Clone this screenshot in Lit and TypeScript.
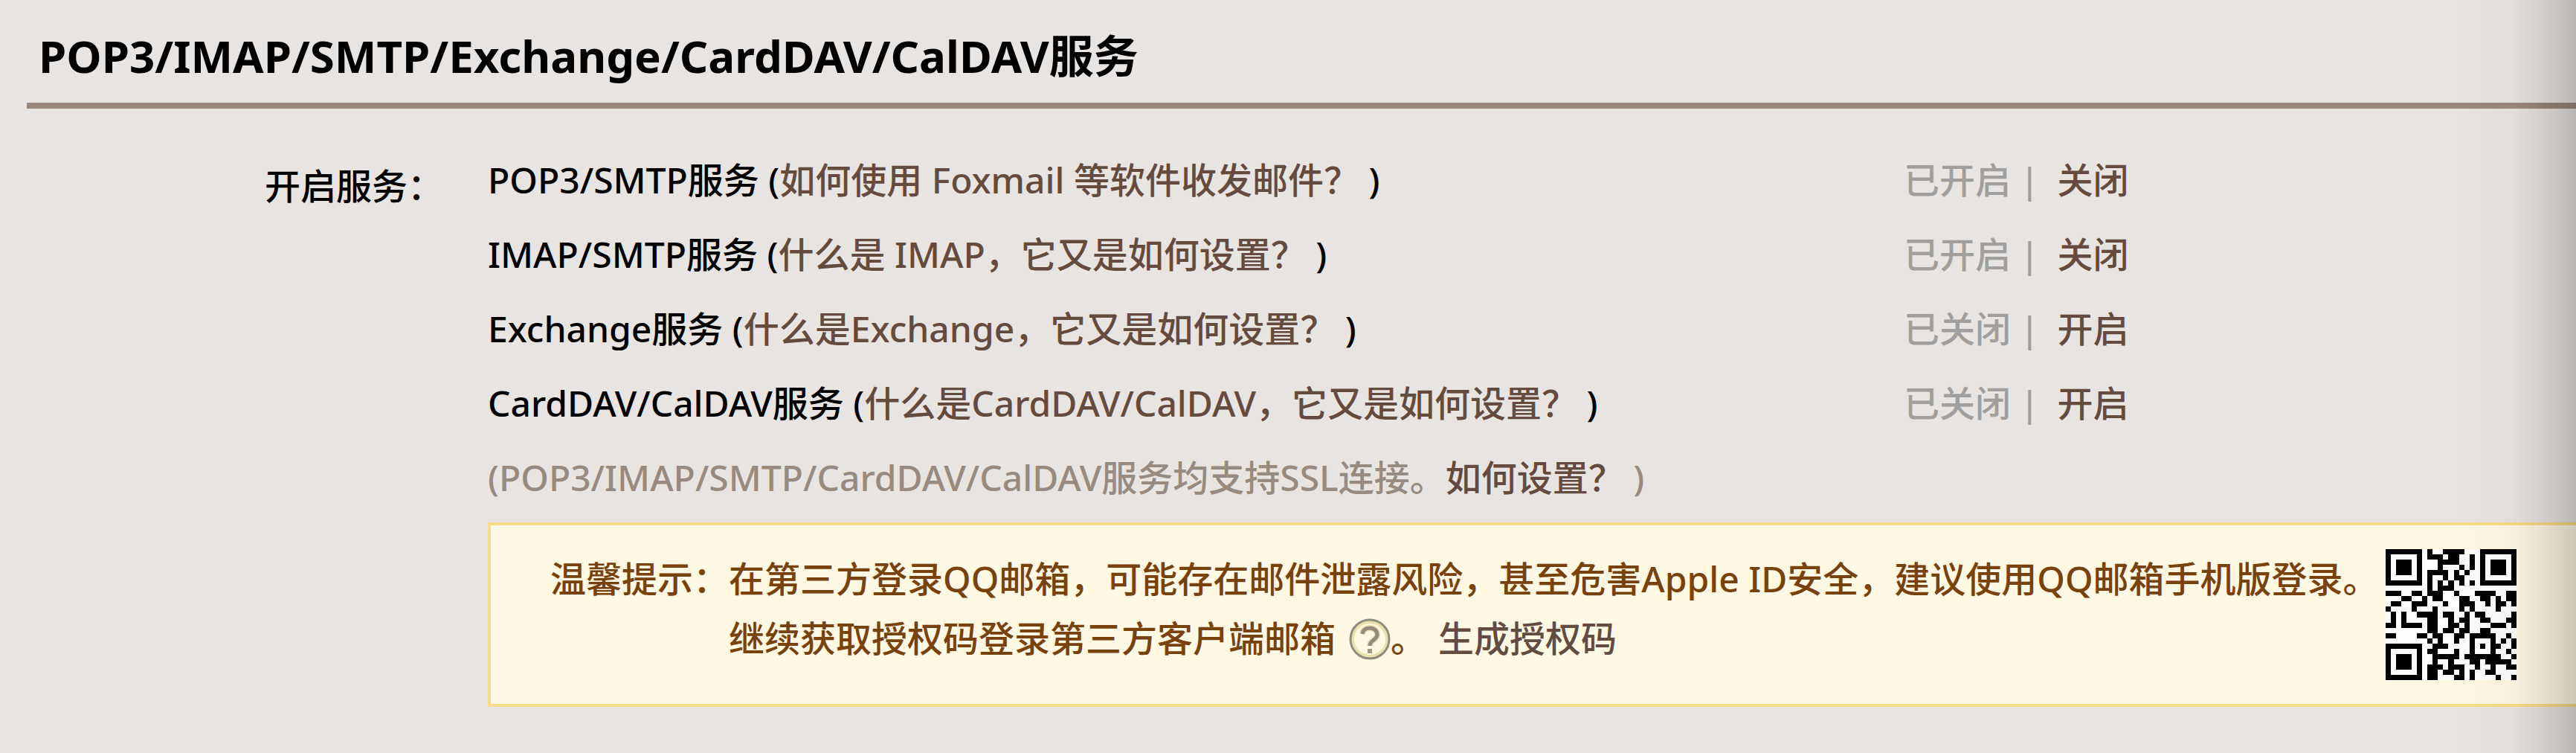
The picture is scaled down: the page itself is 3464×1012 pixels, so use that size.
import { LitElement, html, css } from "lit";
import { customElement, property } from "lit/decorators.js";

interface Service {
  name: string;
  help: string;
  enabled: boolean;
}

/* Full-width punctuation. */
const COMMA = "\uFF0C";
const COLON = "\uFF1A";
const QUESTION = "\uFF1F";

const SERVICES: Service[] = [
  { name: "POP3/SMTP服务", help: `如何使用 Foxmail 等软件收发邮件${QUESTION}`, enabled: true },
  { name: "IMAP/SMTP服务", help: `什么是 IMAP${COMMA}它又是如何设置${QUESTION}`, enabled: true },
  { name: "Exchange服务", help: `什么是Exchange${COMMA}它又是如何设置${QUESTION}`, enabled: false },
  { name: "CardDAV/CalDAV服务", help: `什么是CardDAV/CalDAV${COMMA}它又是如何设置${QUESTION}`, enabled: false },
];

const WARNING = [
  "在第三方登录QQ邮箱",
  "可能存在邮件泄露风险",
  "甚至危害Apple ID安全",
  "建议使用QQ邮箱手机版登录。",
].join(COMMA);

/* One string per module row; # is a dark module. */
const QR_ROWS = [
  "#######.#..####...#######",
  "#.....#.###.##..#.#.....#",
  "#.###.#...####..#.#.###.#",
  "#.###.#...#...#.#.#.###.#",
  "#.###.#.####.#.#..#.###.#",
  "#.....#.#..#.##...#.....#",
  "#######.#.#.#.#.#.#######",
  "........#.###............",
  "###..##.###..#...####..##",
  "...##..#.##...##..##.#.##",
  ".##..###...#..###..#.##.#",
  "#....#...#....#.#....#...",
  ".#.#..####.##..#.##.....#",
  ".#.#....##..#.##..##...##",
  "##.####.##..##.#....###.#",
  "........##.##.##..##.....",
  "##....##.##..##.#####..#.",
  "........#.#..#..#...#.#.#",
  "#######..###....#.#.##..#",
  "#.....#.##...#..#...#..#.",
  "#.###.#..#####.#######..#",
  "#.###.#..#..#...##.#####.",
  "#.###.#.###.###..#..#..##",
  "#.....#.##.##.#.#..##....",
  "#######.##...##.#....#..#",
];

@customElement("qr-code")
export class QrCode extends LitElement {
  static styles = css`
    :host {
      display: block;
      flex: none;
    }
    .code {
      display: block;
      width: 176px;
      height: 176px;
    }
  `;

  render() {
    const d = QR_ROWS.map((row, y) =>
      [...row.matchAll(/#+/g)]
        .map((run) => `M${run.index} ${y}h${run[0].length}v1h-${run[0].length}z`)
        .join("")
    ).join("");
    return html`
      <svg class="code" viewBox="0 0 25 25" role="img" aria-label="QQ邮箱手机版" shape-rendering="crispEdges">
        <rect width="25" height="25" fill="#fdfdfc"></rect>
        <path d=${d} fill="#000"></path>
      </svg>
    `;
  }
}

@customElement("service-row")
export class ServiceRow extends LitElement {
  @property({ attribute: false }) service!: Service;

  static styles = css`
    :host {
      display: grid;
      grid-template-columns: minmax(0, 1fr) 904px;
      line-height: 100px;
    }
    a {
      color: #644b40;
      text-decoration: none;
    }
    .status {
      display: flex;
      color: #a09f9e;
    }
    .divider {
      margin: 0 24px 0 12px;
    }
  `;

  render() {
    const { name, help, enabled } = this.service;
    return html`
      <div>${name} (<a href="#help">${help}</a> )</div>
      <div class="status">
        <span>${enabled ? "已开启" : "已关闭"}</span>
        <span class="divider">|</span>
        <a href="#toggle">${enabled ? "关闭" : "开启"}</a>
      </div>
    `;
  }
}

@customElement("app-root")
export class AppRoot extends LitElement {
  static styles = css`
    :host {
      display: block;
      position: relative;
      box-sizing: border-box;
      min-height: 100vh;
      padding-left: 36px;
      overflow: hidden;
      background: #e7e4e1;
      color: #000;
      font-family: "Noto Sans", "Noto Sans CJK SC", sans-serif;
      font-size: 48px;
      font-weight: 500;
    }
    /* Shade cast along the right edge of the panel. */
    :host::after {
      content: "";
      position: absolute;
      inset: 0 0 0 auto;
      width: 164px;
      pointer-events: none;
      background: linear-gradient(
        to right,
        rgba(0, 0, 0, 0),
        rgba(0, 0, 0, 0.01) 25%,
        rgba(0, 0, 0, 0.03) 48%,
        rgba(0, 0, 0, 0.08) 67%,
        rgba(0, 0, 0, 0.14) 85%,
        rgba(0, 0, 0, 0.2)
      );
    }
    a {
      color: #644b40;
      text-decoration: none;
    }
    .title {
      margin: 0;
      padding: 16px 16px 4px;
      border-bottom: 8px solid #99887d;
      font-size: 60px;
      font-weight: 700;
      line-height: 118px;
    }
    .body {
      display: grid;
      grid-template-columns: 560px minmax(0, 1fr);
      column-gap: 60px;
      padding-top: 46px;
    }
    .label {
      margin: 0;
      padding-top: 8px;
      font-size: 48px;
      font-weight: 500;
      line-height: 100px;
      text-align: right;
    }
    .note {
      margin: 0;
      color: #978a80;
      line-height: 100px;
    }
    .tip {
      display: flex;
      justify-content: space-between;
      margin-top: 10px;
      padding: 32px 80px;
      border: 4px solid #f8dd88;
      border-right: 0;
      background: #fff8e3;
      color: #78420f;
      line-height: 80px;
    }
    .tip-text {
      display: grid;
      grid-template-columns: auto 1fr;
    }
    .tip-text p {
      margin: 0;
    }
    .help {
      width: 56px;
      height: 56px;
      margin-left: 18px;
      padding: 0;
      border: 0;
      background: none;
      vertical-align: middle;
      cursor: pointer;
    }
    .help svg {
      display: block;
      margin-top: -8px;
    }
    .generate {
      margin-left: 16px;
    }
  `;

  render() {
    return html`
      <h1 class="title">POP3/IMAP/SMTP/Exchange/CardDAV/CalDAV服务</h1>
      <div class="body">
        <h2 class="label">开启服务${COLON}</h2>
        <div>
          ${SERVICES.map((s) => html`<service-row .service=${s}></service-row>`)}
          <p class="note">
            (POP3/IMAP/SMTP/CardDAV/CalDAV服务均支持SSL连接。<a href="#ssl">如何设置${QUESTION}</a> )
          </p>
          <section class="tip">
            <div class="tip-text">
              <span>温馨提示${COLON}</span>
              <div>
                <p>${WARNING}</p>
                <p>
                  继续获取授权码登录第三方客户端邮箱<button class="help" type="button" aria-label="帮助">
                    <svg width="56" height="56" viewBox="0 0 56 56" fill="none">
                      <circle cx="28" cy="28" r="24" stroke="#ece0ac" stroke-width="6"></circle>
                      <circle cx="28" cy="28" r="26" stroke="#8f8d80" stroke-width="3"></circle>
                      <path
                        d="M18 21c1-6 5-8 10-8s10 3 10 9c0 7-10 7-10 15"
                        stroke="#e8dcae"
                        stroke-width="8"
                      ></path>
                      <path
                        d="M18 21c1-6 5-8 10-8s10 3 10 9c0 7-10 7-10 15"
                        stroke="#908c7b"
                        stroke-width="5"
                      ></path>
                      <rect x="25" y="41" width="6" height="6" fill="#9f9a82"></rect>
                    </svg></button
                  >。<a class="generate" href="#code">生成授权码</a>
                </p>
              </div>
            </div>
            <qr-code></qr-code>
          </section>
        </div>
      </div>
    `;
  }
}
